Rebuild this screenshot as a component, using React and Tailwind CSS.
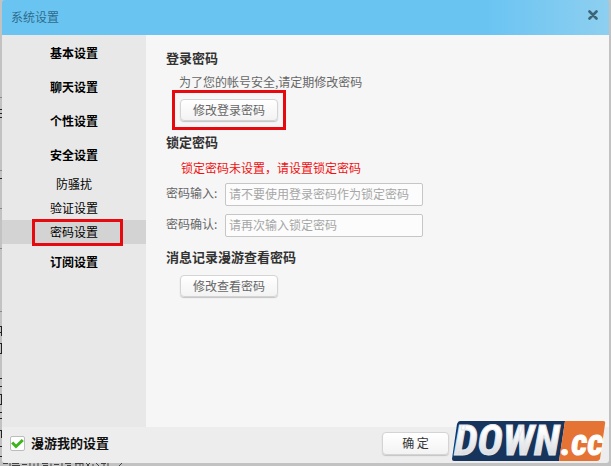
import { useState } from "react"

const NAV = [
  { label: "基本设置" },
  { label: "聊天设置" },
  { label: "个性设置" },
  { label: "安全设置", children: ["防骚扰", "验证设置", "密码设置"] },
  { label: "订阅设置" },
]

function SoftButton({ className = "", children }) {
  return (
    <button
      type="button"
      className={`rounded-[4px] border border-[#d4d4d4] bg-linear-to-b from-white to-[#f3f3f3] shadow-[0_1px_1px_#c4c4c4] ${className}`}
    >
      {children}
    </button>
  )
}

function TitleBar() {
  return (
    <header className="flex h-[35px] items-center justify-between rounded-t-[3px] bg-linear-to-r from-[#6ac4f2] from-80% to-[#8dcff0] pr-[11px] pb-0.5 pl-[9px]">
      <h1 className="text-[#2f6c8c]">系统设置</h1>
      <button type="button" aria-label="关闭" className="-mt-1">
        <svg viewBox="0 0 10 10" className="size-[10px]" fill="none" stroke="#3d6477" strokeWidth="2.6" strokeLinecap="round">
          <path d="M1.5 1.5 8.5 8.5M8.5 1.5 1.5 8.5" />
        </svg>
      </button>
    </header>
  )
}

function Sidebar({ active, onSelect }) {
  return (
    <nav className="w-36 shrink-0 bg-[#e8e8e8] pt-px text-center text-black">
      <ul>
        {NAV.map((item) => (
          <li key={item.label}>
            <button type="button" className="h-[34px] w-full font-bold">
              {item.label}
            </button>
            {item.children && (
              <ul className="mb-px">
                {item.children.map((child) => (
                  <li key={child} className={`relative h-6 ${child === active ? "bg-[#d3d3d3]" : ""}`}>
                    <button type="button" className="h-full w-full" onClick={() => onSelect(child)}>
                      {child}
                    </button>
                    {child === active && (
                      <span className="pointer-events-none absolute -top-px left-[30px] h-[27px] w-[91px] border-3 border-[#e60a0e]" />
                    )}
                  </li>
                ))}
              </ul>
            )}
          </li>
        ))}
      </ul>
    </nav>
  )
}

function Field({ id, label, placeholder }) {
  return (
    <div className="flex items-start">
      <label htmlFor={id} className="w-[59px] leading-5 text-[#666]">
        {label}
      </label>
      <input
        id={id}
        type="password"
        placeholder={placeholder}
        className="h-[23px] w-[198px] rounded-[2px] border border-[#c6c6c6] bg-[#fcfcfc] px-[3px] pb-0.5 placeholder:text-[#a6a6a6]"
      />
    </div>
  )
}

function PasswordPanel() {
  return (
    <main className="min-w-0 flex-1 bg-[#f6f6f6] pt-[13px] pl-5 text-[#666]">
      <section>
        <h2 className="text-[13px] leading-5 font-bold text-[#333]">登录密码</h2>
        <p className="mt-[6px] pl-[13px]">为了您的帐号安全,请定期修改密码</p>
        <div className="ml-[6px] w-fit border-3 border-[#e60a0e] px-[5px] py-[6px]">
          <SoftButton className="block h-[22px] w-[98px]">修改登录密码</SoftButton>
        </div>
      </section>

      <section className="mt-0.5">
        <h2 className="text-[13px] leading-5 font-bold text-[#333]">锁定密码</h2>
        <p className="mt-2 pl-[15px] text-[#ee1111]">锁定密码未设置，请设置锁定密码</p>
        <div className="mt-[7px] flex flex-col gap-2">
          <Field id="lock" label="密码输入:" placeholder="请不要使用登录密码作为锁定密码" />
          <Field id="lock-again" label="密码确认:" placeholder="请再次输入锁定密码" />
        </div>
      </section>

      <section className="mt-[10px]">
        <h2 className="text-[13px] leading-5 font-bold text-[#333]">消息记录漫游查看密码</h2>
        <SoftButton className="mt-2 ml-[14px] block h-[22px] w-[98px]">修改查看密码</SoftButton>
      </section>
    </main>
  )
}

function DownLogo() {
  return (
    <svg
      viewBox="0 0 156 42"
      className="absolute right-[2px] bottom-px h-[42px] w-[156px] overflow-visible"
      role="img"
      aria-label="DOWN.cc"
    >
      <defs>
        <linearGradient id="silver" x1="0" y1="0" x2="0" y2="1">
          <stop offset="0.3" stopColor="#ffffff" />
          <stop offset="1" stopColor="#c9ccd2" />
        </linearGradient>
      </defs>
      <path d="M9 1H114L108 41H3Q1 41 1 39L6 4Q7 1 9 1Z" fill="#17345c" />
      <path d="M114 1H152Q155 1 154 4L149 39Q148 41 146 41H108Z" fill="#e57434" />
      <g fontFamily="'Liberation Sans Narrow', 'Roboto Condensed', 'Liberation Sans', sans-serif" fontWeight="700" fontStyle="italic">
        <text x="3" y="35" fontSize="43" fill="url(#silver)" stroke="#e6e8ec">DOWN</text>
        <text x="110" y="35" fontSize="36" fill="#ffffff" stroke="#ffffff">.cc</text>
      </g>
    </svg>
  )
}

function Footer() {
  const [roaming, setRoaming] = useState(true)

  return (
    <footer className="relative flex h-9 items-center justify-between rounded-b-[3px] bg-[#ededed] pr-40 pb-1 pl-2">
      <label className="flex items-center gap-[6px] text-[13px] font-bold text-[#111]">
        <span className="relative flex size-[15px]">
          <input
            type="checkbox"
            checked={roaming}
            onChange={(e) => setRoaming(e.target.checked)}
            className="size-[15px] appearance-none rounded-[2px] border border-[#bcbcbc] bg-white"
          />
          {roaming && (
            <svg viewBox="0 0 15 15" className="pointer-events-none absolute inset-0" fill="none" stroke="#3fb41c" strokeWidth="3">
              <path d="M2.2 6.5 6 10.5 12.800 4" />
            </svg>
          )}
        </span>
        漫游我的设置
      </label>
      <SoftButton className="h-[23px] w-[67px] text-[#333]">确 定</SoftButton>
      <DownLogo />
    </footer>
  )
}

// slivers of the page that lies behind the window
function Backdrop() {
  return (
    <>
      <svg className="absolute top-0 left-0 h-[463px] w-[2px]" viewBox="0 0 2 463" fill="none" stroke="#222" aria-hidden="true">
        <path d="M0 109.500H2M0 113.500H2M0 117.500H2M0 178.500H2M0 326.500H2M0 332.500H2M1.500 326V336M0 343.500H2M1.500 343V354M0 353.500H2M0 378.500H2M0 386.500H2M0 394.500H2M1.500 394V405M0 404.500H2M0 412.500H2M0 418.500H2M0 430.500H2M1.500 430V438M0 446.500H2M0 456.500H2" />
        <path d="M0 97.500H2M0 170.500H2M0 208.500H2M0 248.500H2M0 311.500H2" stroke="#888" />
      </svg>
      <svg className="absolute bottom-0 left-0 h-[3px] w-[124px]" viewBox="0 0 124 3" fill="none" stroke="#444" aria-hidden="true">
        <path d="M3 .5H8M10 0V3M12 .5H19M12 2.500H20M22 1.500H27M30 0V3M34 .5V3M38 0V3M42 .5H48M43 2.500H48M51 .5V3M54 1.500H59M62 0V3M65 .5H71M67 2.500H71M75 .5H83M76 0V3M80 0V3M83 0V3M86 0L89 3M90 0L87 3M93 1V3M96 0L99 3M101 .5H106M104 0V3M108 0V3M119 3L122 0" />
      </svg>
    </>
  )
}

export default function App() {
  const [active, setActive] = useState("密码设置")

  return (
    <div className="relative flex min-h-screen flex-col bg-[#c2c2c2] pr-[2px] pb-[3px] pl-[2px] font-['Noto_Sans_CJK_SC','Liberation_Sans',sans-serif] text-[12px] leading-4">
      <Backdrop />
      <TitleBar />
      <div className="flex flex-1">
        <Sidebar active={active} onSelect={setActive} />
        <PasswordPanel />
      </div>
      <Footer />
    </div>
  )
}
